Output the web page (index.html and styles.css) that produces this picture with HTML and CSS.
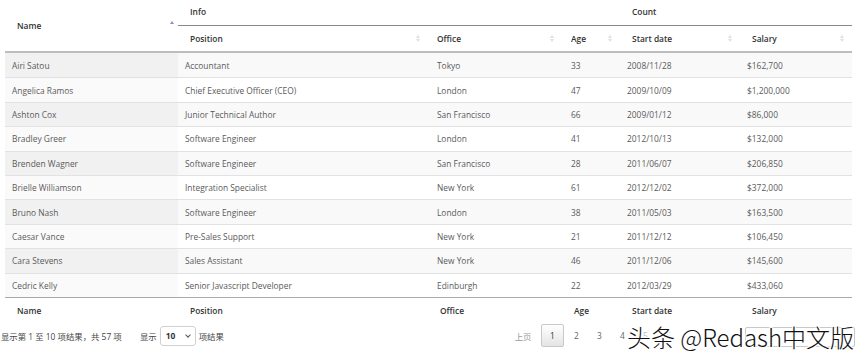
FILE: index.html
```html
<!DOCTYPE html>
<html lang="zh-CN">
<head>
  <meta charset="UTF-8" />
  <meta name="viewport" content="width=device-width, initial-scale=1.0"/>
  <title>DataTables 复杂表头</title>
  <link rel="stylesheet" href="styles.css">
</head>
<body>
  <div class="wrap">
    <table class="dt">
      <colgroup>
        <col class="c-name"><col class="c-pos"><col class="c-office"><col class="c-age"><col class="c-date"><col class="c-salary">
      </colgroup>
      <thead>
        <tr class="top">
          <th rowspan="2" class="sortable asc"><div class="th"><span>Name</span><i class="sort"></i></div></th>
          <th colspan="3" class="group">Info</th>
          <th colspan="2" class="group">Count</th>
        </tr>
        <tr class="sub">
          <th class="sortable"><div class="th"><span>Position</span><i class="sort"></i></div></th>
          <th class="sortable"><div class="th"><span>Office</span><i class="sort"></i></div></th>
          <th class="sortable"><div class="th"><span>Age</span><i class="sort"></i></div></th>
          <th class="sortable"><div class="th"><span>Start date</span><i class="sort"></i></div></th>
          <th class="sortable"><div class="th"><span>Salary</span><i class="sort"></i></div></th>
        </tr>
      </thead>
      <tbody>
        <tr><td>Airi Satou</td><td>Accountant</td><td>Tokyo</td><td>33</td><td>2008/11/28</td><td>$162,700</td></tr>
        <tr><td>Angelica Ramos</td><td>Chief Executive Officer (CEO)</td><td>London</td><td>47</td><td>2009/10/09</td><td>$1,200,000</td></tr>
        <tr><td>Ashton Cox</td><td>Junior Technical Author</td><td>San Francisco</td><td>66</td><td>2009/01/12</td><td>$86,000</td></tr>
        <tr><td>Bradley Greer</td><td>Software Engineer</td><td>London</td><td>41</td><td>2012/10/13</td><td>$132,000</td></tr>
        <tr><td>Brenden Wagner</td><td>Software Engineer</td><td>San Francisco</td><td>28</td><td>2011/06/07</td><td>$206,850</td></tr>
        <tr><td>Brielle Williamson</td><td>Integration Specialist</td><td>New York</td><td>61</td><td>2012/12/02</td><td>$372,000</td></tr>
        <tr><td>Bruno Nash</td><td>Software Engineer</td><td>London</td><td>38</td><td>2011/05/03</td><td>$163,500</td></tr>
        <tr><td>Caesar Vance</td><td>Pre-Sales Support</td><td>New York</td><td>21</td><td>2011/12/12</td><td>$106,450</td></tr>
        <tr><td>Cara Stevens</td><td>Sales Assistant</td><td>New York</td><td>46</td><td>2011/12/06</td><td>$145,600</td></tr>
        <tr><td>Cedric Kelly</td><td>Senior Javascript Developer</td><td>Edinburgh</td><td>22</td><td>2012/03/29</td><td>$433,060</td></tr>
      </tbody>
      <tfoot>
        <tr><th>Name</th><th>Position</th><th>Office</th><th>Age</th><th>Start date</th><th>Salary</th></tr>
      </tfoot>
    </table>

    <div class="bottom">
      <div class="info">显示第 1 至 10 项结果，共 57 项</div>
      <div class="length">显示 <span class="select">10<i class="chev"></i></span> 项结果</div>
      <div class="paging">
        <span class="pg prev">上页</span>
        <span class="pg current">1</span>
        <span class="pg">2</span>
        <span class="pg">3</span>
        <span class="pg">4</span>
        <span class="pg faint">5</span>
        <span class="pg faint">6</span>
        <span class="pg next"></span>
      </div>
    </div>

    <div class="watermark">头条 @Redash中文版</div>
  </div>
</body>
</html>
```

FILE: styles.css
```css
* { box-sizing: border-box; }
body {
  margin: 0;
  padding: 0;
  background: #fff;
  font-family: "Open Sans", "Noto Sans", "Noto Sans CJK SC", sans-serif;
  color: #555;
}
.wrap {
  position: relative;
  width: 864px;
  height: 354px;
  overflow: hidden;
}

.dt {
  margin-left: 5px;
  width: 847px;
  table-layout: fixed;
  border-collapse: separate;
  border-spacing: 0;
  font-size: 8.4px;
}
.c-name { width: 173px; }
.c-pos { width: 250px; }
.c-office { width: 134px; }
.c-age { width: 58px; }
.c-date { width: 120px; }
.c-salary { width: 112px; }

.dt th {
  font-weight: 600;
  color: #333;
  text-align: left;
  padding: 0 8px 0 12px;
}
.dt thead .top th { height: 26px; }
.dt thead .top th.group {
  border-bottom: 1px solid #8a8a8a;
  vertical-align: middle;
  padding-bottom: 2px;
}
.dt thead th[rowspan] {
  border-bottom: 2px solid #bdbdbd;
  padding-right: 4px;
}
.dt thead .sub th {
  height: 27px;
  border-bottom: 2px solid #bdbdbd;
}
.dt thead .sub th:nth-child(2),
.dt thead .sub th:nth-child(3) { padding-left: 9px; }
.th {
  display: flex;
  align-items: center;
  justify-content: space-between;
}

.sort {
  display: flex;
  flex-direction: column;
  gap: 1px;
}
.sort::before,
.sort::after {
  content: "";
  border-left: 2.5px solid transparent;
  border-right: 2.5px solid transparent;
}
.sort::before { border-bottom: 3px solid #e0e0e0; }
.sort::after { border-top: 3px solid #e0e0e0; }
.asc .sort { margin-top: -2px; }
.asc .sort::before { border-bottom-color: #8d8dc9; }
.asc .sort::after { border-top-color: transparent; }

.dt td {
  height: 24.4px;
  padding: 0 6px 0 7px;
  border-top: 1px solid #e2e2e2;
  white-space: nowrap;
  color: #5a5a5a;
}
.dt tbody tr:first-child td { border-top: none; }
.dt td:nth-child(3) { padding-left: 9px; }
.dt td:nth-child(4) { padding-left: 9px; }
.dt tbody tr:nth-child(odd) td { background: #f9f9f9; }
.dt tbody tr:nth-child(odd) td:first-child { background: #f1f1f1; }
.dt tbody tr:nth-child(even) td:first-child { background: #fafafa; }

.dt tfoot th {
  height: 27px;
  border-top: 1px solid #a9a9a9;
}

.bottom {
  display: flex;
  align-items: center;
  height: 24px;
  margin-top: 0;
  font-size: 8.4px;
  color: #444;
}
.info { padding-left: 1px; width: 140px; }
.length {
  display: flex;
  align-items: center;
  gap: 3px;
}
.select {
  display: inline-flex;
  align-items: center;
  justify-content: space-between;
  width: 36px;
  height: 20px;
  padding: 0 5px;
  border: 1px solid #d0d0d0;
  border-radius: 3px;
  font-weight: 700;
  color: #333;
  background: #fff;
}
.chev {
  width: 4px;
  height: 4px;
  border-right: 1px solid #555;
  border-bottom: 1px solid #555;
  transform: rotate(45deg);
  margin-top: -2px;
}

.paging {
  display: flex;
  align-items: center;
  margin-left: auto;
  margin-right: 9px;
}
.pg {
  display: inline-flex;
  align-items: center;
  justify-content: center;
  min-width: 23px;
  height: 23px;
  color: #666;
}
.pg.faint { color: #bbb; }
.pg.prev { margin-right: 6px; color: #999; min-width: 24px; }
.pg.current {
  border: 1px solid #c8c8c8;
  border-radius: 2px;
  background: linear-gradient(#fff, #e4e4e4);
  color: #333;
  margin-right: 1px;
}
.pg.next {
  width: 110px;
  height: 20px;
  margin-left: 65px;
  margin-top: 3px;
  border: 1px solid #c8c8c8;
  border-radius: 2px;
  background: #fff;
}

.watermark {
  position: absolute;
  left: 627px;
  top: 319px;
  font-family: "Noto Sans CJK SC", "Noto Sans", sans-serif;
  font-size: 24px;
  font-weight: 300;
  color: #111;
  white-space: nowrap;
  text-shadow: 0 0 2px #fff, 0 0 2px #fff, 1px 1px 0 #fff, -1px -1px 0 #fff, 1px -1px 0 #fff, -1px 1px 0 #fff;
}
```
